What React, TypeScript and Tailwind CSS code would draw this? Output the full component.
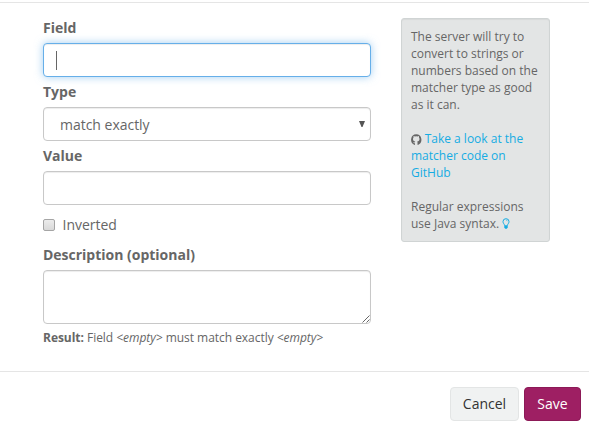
import type { ReactNode } from 'react';

const control =
  'w-full rounded border border-[#c8c8c8] bg-white shadow-[inset_0_1px_1px_rgba(0,0,0,0.075)]';

function Label({ children }: { children: ReactNode }) {
  return <label className="mb-[5px] block font-bold tracking-[-0.01px]">{children}</label>;
}

function Link({ children }: { children: ReactNode }) {
  return (
    <a href="#" className="text-[#16ace3]">
      {children}
    </a>
  );
}

function GithubIcon() {
  return (
    <svg className="inline h-[11px] w-[10.5px] align-[-1.5px]" viewBox="0 0.5 10 10" preserveAspectRatio="none" fill="currentColor">
      <path d="M5 .7A5 5 0 0 0 3.4 10.4c.3 0 .4-.1.4-.3V8.8c-1.2.2-1.6-.3-1.8-.9.5.1.9.4 1.8.2 0-.4.1-.6.3-.8C2.7 7.1 1.9 6.4 1.9 5c0-.6.2-1 .5-1.4-.1-.3-.1-.8.1-1.3.5 0 .9.2 1.3.5a5 5 0 0 1 2.400 0c.4-.3.8-.5 1.300-.5.2.5.2 1 .1 1.300.3.4.5.8.5 1.400 0 1.400-.8 2.100-2.200 2.300.2.2.3.5.3.9v1.900c0 .2.1.3.4.3A5 5 0 0 0 5 .7z" />
    </svg>
  );
}

function BulbIcon() {
  return (
    <svg className="inline h-[11px] w-2 align-[-1px]" viewBox="0 0 8 11" fill="none" stroke="currentColor">
      <path d="M2.600 7.500C2.500 6 1 5.500 1 3.600a3 2.900 0 0 1 6 0C7 5.500 5.500 6 5.400 7.500" />
      <path d="M4.200 2.200q1.100.1 1.200 1" strokeWidth="0.6" />
      <path d="M2.300 7.200h3.400v2.400l-.9 1.100H3.200l-.9-1.100z" fill="currentColor" stroke="none" />
    </svg>
  );
}

function RuleForm() {
  return (
    <form className="w-[328px]">
      <Label>Field</Label>
      <div className="mb-[5px] flex h-[34px] items-center rounded border border-[#66afe9] bg-white px-3 shadow-[inset_0_1px_1px_rgba(0,0,0,0.075),0_0_8px_rgba(102,175,233,0.6)]">
        <span className="h-[19px] w-px bg-[#666666]" />
      </div>

      <Label>Type</Label>
      <div className={`${control} mb-[5px] flex h-[34px] items-center justify-between pr-[5px] pl-4`}>
        <span className="pt-px tracking-[-0.02px]">match exactly</span>
        <svg className="mb-px" width="6" height="6" viewBox="0 0 6 6" fill="#555555">
          <path d="M0 0h6L3.500 6h-1z" />
        </svg>
      </div>

      <Label>Value</Label>
      <input className={`${control} mb-[10px] block h-[34px] px-3 outline-none`} />

      <label className="mb-[10px] flex h-5 items-center tracking-[-0.02px]">
        <input
          type="checkbox"
          className="mr-[7.5px] h-3 w-3 appearance-none rounded-[2px] border border-[#a5a5a5] bg-linear-to-b from-[#ececec] to-[#d9d9d9]"
        />
        Inverted
      </label>

      <Label>Description (optional)</Label>
      <div className="relative">
        <textarea className={`${control} block h-[54px] resize-none px-3 py-[6px] outline-none`} />
        <svg
          className="absolute right-px bottom-px"
          width="8"
          height="8"
          viewBox="0 0 8 8"
          stroke="#555555"
          strokeWidth="0.9"
        >
          <path d="M0.5 7.5l7-7M4.5 7.5l3-3" />
        </svg>
      </div>

      <p className="mt-[5px] text-[12px] leading-[17px] tracking-[-0.035px]">
        <strong>Result:</strong> Field <em>&lt;empty&gt;</em> must match exactly <em>&lt;empty&gt;</em>
      </p>
    </form>
  );
}

function HelpPanel() {
  return (
    <aside className="h-[224px] w-[149px] rounded-[3px] border border-[#d0d4d4] bg-[#e3e5e5] px-[9px] pt-[9px] text-[12px] leading-[17px] shadow-[inset_0_1px_1px_rgba(0,0,0,0.05)]">
      <p className="mb-[17px]">
        The server will try to convert to strings or numbers based on the matcher type as good as it can.
      </p>
      <p className="mb-[17px]">
        <GithubIcon />{' '}
        <Link>
          Take a look at the
          <br />
          matcher code on GitHub
        </Link>
      </p>
      <p>
        Regular expressions use Java syntax.{' '}
        <Link>
          <BulbIcon />
        </Link>
      </p>
    </aside>
  );
}

export default function App() {
  return (
    <div className="h-[429px] w-[589px] overflow-hidden bg-white pt-[2px] font-['Open_Sans',sans-serif] text-[14px] leading-5 text-[#666666]">
      <main className="flex h-[370px] items-start gap-[30px] border-y border-[#e5e5e5] pt-[15px] pl-[43px]">
        <RuleForm />
        <HelpPanel />
      </main>
      <footer className="flex justify-end gap-[5px] pt-[15px] pr-2">
        <button className="h-[34px] w-[69px] rounded border border-[#e3e5e5] bg-[#f0f2f2] text-[#333333]">
          Cancel
        </button>
        <button className="h-[34px] w-[57px] rounded border border-[#8c1a57] bg-[#9e1f63] text-white">
          Save
        </button>
      </footer>
    </div>
  );
}
